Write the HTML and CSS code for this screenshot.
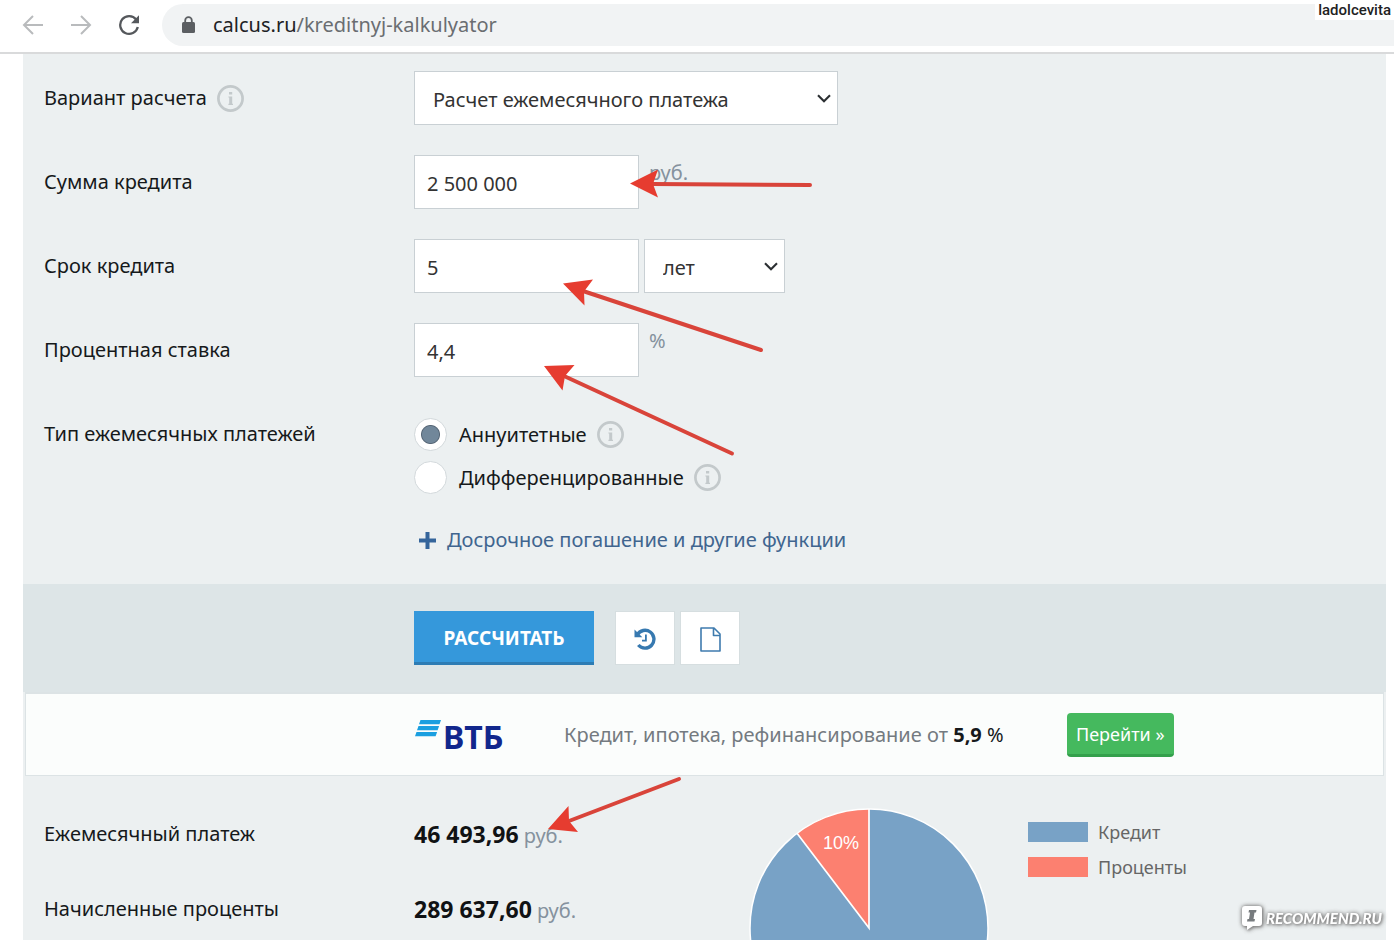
FILE: index.html
```html
<!DOCTYPE html>
<html lang="ru">
<head>
<meta charset="utf-8">
<title>Кредитный калькулятор</title>
<link rel="stylesheet" href="styles.css">
</head>
<body>
<svg class="defs" aria-hidden="true">
  <symbol id="info" viewBox="0 0 27 27">
    <circle cx="13.5" cy="13.5" r="12.1" fill="none" stroke="currentColor" stroke-width="2.7"/>
    <path d="M12 7h3.200v2.600H12zM11.400 11.400h3.800v7.400h.8v1.200h-4.600v-1.200h.8v-6.200h-.8z" fill="currentColor"/>
  </symbol>
  <symbol id="chevron" viewBox="0 0 14 9">
    <path d="M1 1.2l6 6 6-6" fill="none" stroke="currentColor" stroke-width="2.1"/>
  </symbol>
</svg>

<header class="toolbar">
  <nav class="nav">
    <button class="nav-btn" type="button" aria-label="Назад"><svg width="22" height="22" viewBox="0 0 22 22"><path d="M21 11H2.500M11 2L2 11l9 9" fill="none" stroke="#b9bbbd" stroke-width="2"/></svg></button>
    <button class="nav-btn" type="button" aria-label="Вперёд"><svg width="22" height="22" viewBox="0 0 22 22"><path d="M1 11h18.500M11 2l9 9-9 9" fill="none" stroke="#b9bbbd" stroke-width="2"/></svg></button>
    <button class="nav-btn" type="button" aria-label="Обновить"><svg width="22" height="22" viewBox="0 0 22 22"><path d="M18.200 5.600A8.900 8.900 0 1 0 19.800 13" fill="none" stroke="#55585c" stroke-width="2.300"/><path d="M21 1.200v8h-8z" fill="#55585c"/></svg></button>
  </nav>
  <div class="address">
    <svg width="13" height="18" viewBox="0 0 13 18"><path d="M3.200 7V4.500a3.300 3.300 0 0 1 6.600 0V7" fill="none" stroke="#5b5e62" stroke-width="1.800"/><rect x="0" y="6" width="13" height="11" rx="1.500" fill="#5b5e62"/></svg>
    <span class="url"><span class="host">calcus.ru</span>/kreditnyj-kalkulyator</span>
  </div>
  <span class="author">ladolcevita</span>
</header>

<main class="page">
  <form class="calc">
    <div class="fields">
      <div class="row">
        <div class="label"><label for="mode">Вариант расчета</label><svg class="info"><use href="#info"/></svg></div>
        <div class="control">
          <span class="select select-wide"><select id="mode"><option>Расчет ежемесячного платежа</option></select><svg class="chevron"><use href="#chevron"/></svg></span>
        </div>
      </div>
      <div class="row">
        <div class="label"><label for="sum">Сумма кредита</label></div>
        <div class="control"><input class="text" id="sum" type="text" value="2 500 000"><span class="unit">руб.</span></div>
      </div>
      <div class="row">
        <div class="label"><label for="term">Срок кредита</label></div>
        <div class="control">
          <input class="text" id="term" type="text" value="5">
          <span class="select select-narrow"><select aria-label="Единица срока"><option>лет</option></select><svg class="chevron"><use href="#chevron"/></svg></span>
        </div>
      </div>
      <div class="row">
        <div class="label"><label for="rate">Процентная ставка</label></div>
        <div class="control"><input class="text" id="rate" type="text" value="4,4"><span class="unit">%</span></div>
      </div>
      <div class="row">
        <div class="label">Тип ежемесячных платежей</div>
        <div class="options">
          <div class="option"><input class="radio" type="radio" name="type" id="annuity" checked><label for="annuity">Аннуитетные</label><svg class="info"><use href="#info"/></svg></div>
          <div class="option"><input class="radio" type="radio" name="type" id="diff"><label for="diff">Дифференцированные</label><svg class="info"><use href="#info"/></svg></div>
          <a class="more" href="#more"><svg width="17" height="17" viewBox="0 0 17 17"><path d="M6.500 0h4v6.500H17v4h-6.500V17h-4v-6.500H0v-4h6.500z" fill="#35659b"/></svg>Досрочное погашение и другие функции</a>
        </div>
      </div>
    </div>

    <div class="actions">
      <button class="submit" type="submit">РАССЧИТАТЬ</button>
      <div class="tools">
        <button class="tool" type="button" aria-label="История"><svg width="22" height="22" viewBox="0 0 22 22"><path d="M3.300 6.800A8.900 8.900 0 1 1 4.300 17" fill="none" stroke="#3779b0" stroke-width="3.400"/><path d="M.5 1.500v7.700h7.800z" fill="#3779b0"/><path d="M11.900 6.600v6H8" fill="none" stroke="#3779b0" stroke-width="1.800"/></svg></button>
        <button class="tool" type="button" aria-label="Документ"><svg width="21" height="25" viewBox="0 0 21 25"><path d="M1 1h13l6 6v17H1z M13.500 1v7.500H20" fill="none" stroke="#3f7bae" stroke-width="1.600" stroke-linejoin="round"/></svg></button>
      </div>
    </div>
  </form>

  <section class="bank">
    <div class="bank-logo">
      <svg width="26" height="18" viewBox="0 0 26 18" aria-hidden="true"><path d="M5.500 1H26l-1.500 4.200H4zM3.500 7h20.600l-1.500 4.200H2zM1.500 13h20.600l-1.500 4.200H0z" fill="#1a9fe0"/></svg>
      <span class="bank-name">ВТБ</span>
    </div>
    <p class="bank-text">Кредит, ипотека, рефинансирование от <span class="bank-rate"><b>5,9</b> %</span></p>
    <a class="go" href="#go">Перейти »</a>
  </section>

  <section class="results">
    <dl class="totals">
      <div class="total"><dt>Ежемесячный платеж</dt><dd><b>46 493,96</b> руб.</dd></div>
      <div class="total"><dt>Начисленные проценты</dt><dd><b>289 637,60</b> руб.</dd></div>
    </dl>
    <svg class="pie" width="240" height="240" viewBox="0 0 240 240" role="img" aria-label="Кредит и проценты">
      <circle cx="120" cy="120" r="119" fill="#78a2c6"/>
      <path d="M120 120V1A119 119 0 0 0 48 25.300Z" fill="#fc8070"/>
      <path d="M120 1V120L48 25.300" fill="none" stroke="#fff" stroke-width="1.700"/>
      <circle cx="120" cy="120" r="119" fill="none" stroke="#fff" stroke-width="1.500"/>
      <text class="pie-text" x="92" y="41" text-anchor="middle">10%</text>
    </svg>
    <ul class="legend">
      <li><i class="swatch swatch-credit"></i>Кредит</li>
      <li><i class="swatch swatch-interest"></i>Проценты</li>
    </ul>
  </section>
</main>

<svg class="arrows" width="840" height="840" viewBox="0 0 840 840" aria-hidden="true">
  <g fill="none" stroke="#d9443a" stroke-width="4" stroke-linecap="round">
    <path d="M652 184L810 185"/>
    <path d="M583 291L761 350"/>
    <path d="M564 376L732 453.500"/>
    <path d="M569 821L679 779"/>
  </g>
  <g fill="#e63c30">
    <path d="M630 183.500l28-14-5 14.500 5 13.500z"/>
    <path d="M563 283.500l30-4-9 12 .5 14z"/>
    <path d="M544 366l30.500-1-9.500 11-2.500 14.500z"/>
    <path d="M548 829l20.500-23 .5 15 9 11z"/>
  </g>
</svg>

<div class="watermark">
  <svg width="22" height="26" viewBox="0 0 22 26" aria-hidden="true"><path d="M4 1h14q3 0 3 3v14q0 3-3 3h-6l-6 4v-4H4q-3 0-3-3V4q0-3 3-3z" fill="#fff"/><path d="M8 5h7.500l-.5 2.500h-1.500l-1 6.500H14l-.5 2.500H6l.5-2.500H8l1-6.500H7.500z" fill="#777b7e"/></svg>
  <span>RECOMMEND.RU</span>
</div>
</body>
</html>
```

FILE: styles.css
```css
* {
  box-sizing: border-box;
}

body {
  position: relative;
  display: flex;
  flex-direction: column;
  height: 100vh;
  margin: 0;
  overflow: hidden;
  background: #fff;
  color: #16191b;
  font: 20px/28px "Noto Sans", "Open Sans", sans-serif;
}

input, select, button {
  margin: 0;
  font: inherit;
  color: inherit;
}

button, a {
  cursor: pointer;
}

svg {
  display: block;
  flex: none;
}

.defs {
  position: absolute;
  width: 0;
  height: 0;
}

/* Browser toolbar */
.toolbar {
  position: relative;
  display: flex;
  flex: none;
  gap: 22px;
  padding: 4px 0 6px 22px;
  border-bottom: 2px solid #d9dadb;
}

.nav {
  display: flex;
  align-items: center;
  gap: 26px;
}

.nav-btn {
  padding: 0;
  border: 0;
  background: none;
}

.address {
  display: flex;
  flex: 1;
  align-items: center;
  gap: 18px;
  height: 42px;
  padding-left: 20px;
  border-radius: 21px 0 0 21px;
  background: #f1f3f4;
}

.url {
  color: #6a6d71;
}

.host {
  color: #202124;
}

.author {
  position: absolute;
  top: 0;
  right: 0;
  padding: 0 3px;
  background: #fff;
  color: #222;
  font: 500 15px/20px Roboto, sans-serif;
}

/* Calculator */
.page {
  flex: 1;
  min-height: 0;
  margin: 0 8px 0 23px;
  overflow: hidden;
  background: #ecf0f1;
}

.fields {
  display: flex;
  flex-direction: column;
  gap: 30px;
  padding: 17px 21px 30px;
}

.row {
  display: grid;
  grid-template-columns: 370px 1fr;
}

.label {
  display: flex;
  align-items: center;
  gap: 10px;
  height: 54px;
}

.info {
  width: 27px;
  height: 27px;
  color: #c3c9cb;
}

.control {
  display: flex;
  gap: 5px;
}

.text, .select select {
  height: 54px;
  border: 1px solid #c9d0d4;
  border-radius: 0;
  background: #fff;
  color: #333;
}

.text {
  width: 225px;
  padding: 2px 12px 0;
}

.select {
  position: relative;
}

.select-wide {
  width: 424px;
}

.select-narrow {
  width: 141px;
}

.select select {
  width: 100%;
  padding: 3px 18px 0;
  appearance: none;
}

.chevron {
  position: absolute;
  top: 23px;
  right: 7px;
  width: 14px;
  height: 9px;
  color: #2b2f32;
  pointer-events: none;
}

.unit {
  padding: 4px 5px;
  color: #85929e;
}

.options {
  display: flex;
  flex-direction: column;
  align-items: flex-start;
  gap: 10px;
  padding-top: 11px;
}

.option {
  display: flex;
  align-items: center;
  gap: 10px;
}

.radio {
  width: 33px;
  height: 33px;
  margin-right: 2px;
  border: 1px solid #d3d9dc;
  border-radius: 50%;
  background: #fff;
  appearance: none;
}

.radio:checked {
  background: radial-gradient(circle, #71879a 8px, #566676 9px, #fff 10px);
}

.more {
  display: flex;
  align-items: center;
  gap: 11px;
  margin-top: 22px;
  padding-left: 5px;
  color: #40658f;
  text-decoration: none;
}

.actions {
  display: flex;
  align-items: center;
  gap: 21px;
  height: 108px;
  padding-left: 391px;
  background: #dde5e7;
}

.submit {
  width: 180px;
  height: 54px;
  padding: 3px 0 0;
  border: 0;
  border-bottom: 3px solid #2d7cb4;
  background: #3598db;
  color: #fff;
  font-size: 19px;
  font-weight: 700;
}

.tools {
  display: flex;
  gap: 5px;
}

.tool {
  display: flex;
  align-items: center;
  justify-content: center;
  width: 60px;
  height: 54px;
  padding: 2px 0 0;
  border: 1px solid #d6dee0;
  background: #fff;
}

/* Bank offer */
.bank {
  display: flex;
  align-items: center;
  height: 84px;
  margin: 0 2px;
  padding-left: 389px;
  border: 1px solid #dce3e5;
  border-top-width: 2px;
  background: #fbfdfc;
}

.bank-logo {
  display: flex;
  align-items: flex-start;
  width: 149px;
  gap: 2px;
}

.bank-name {
  padding-top: 4px;
  color: #11278c;
  font: 700 32px/28px "Noto Sans", sans-serif;
}

.bank-text {
  width: 503px;
  margin: 0;
  color: #747a80;
}

.bank-rate {
  color: #16191b;
}

.go {
  padding: 8px 9px 7px;
  border-bottom: 3px solid #34a04c;
  border-radius: 4px;
  background: #45b95e;
  color: #fff;
  font-size: 18px;
  line-height: 26px;
  text-decoration: none;
}

/* Results */
.results {
  display: flex;
  align-items: flex-start;
  padding: 32px 21px;
}

.totals {
  display: flex;
  flex-direction: column;
  gap: 45px;
  width: 705px;
  margin: 0;
  padding-top: 12px;
}

.total {
  display: grid;
  grid-template-columns: 370px 1fr;
}

dd {
  margin: 0;
  color: #85929e;
}

dd b {
  color: #101214;
  font-size: 23px;
}

.pie-text {
  fill: #fff;
  font: 18px "Liberation Sans", sans-serif;
}

.legend {
  display: flex;
  flex-direction: column;
  gap: 7px;
  margin: 0;
  padding: 10px 0 0 39px;
  color: #666;
  font-size: 18px;
  list-style: none;
}

.legend li {
  display: flex;
  align-items: center;
  gap: 10px;
}

.swatch {
  width: 60px;
  height: 20px;
}

.swatch-credit {
  background: #78a2c6;
}

.swatch-interest {
  background: #fc8070;
}

/* Annotations over the page */
.arrows {
  position: absolute;
  top: 0;
  left: 0;
  pointer-events: none;
}

.watermark {
  position: absolute;
  right: 12px;
  bottom: 9px;
  display: flex;
  align-items: center;
  gap: 3px;
  color: #fff;
  font: italic 900 15px/26px Lato, sans-serif;
  filter: drop-shadow(0 0 2px #777) drop-shadow(1px 1px 1px #999);
}
```
